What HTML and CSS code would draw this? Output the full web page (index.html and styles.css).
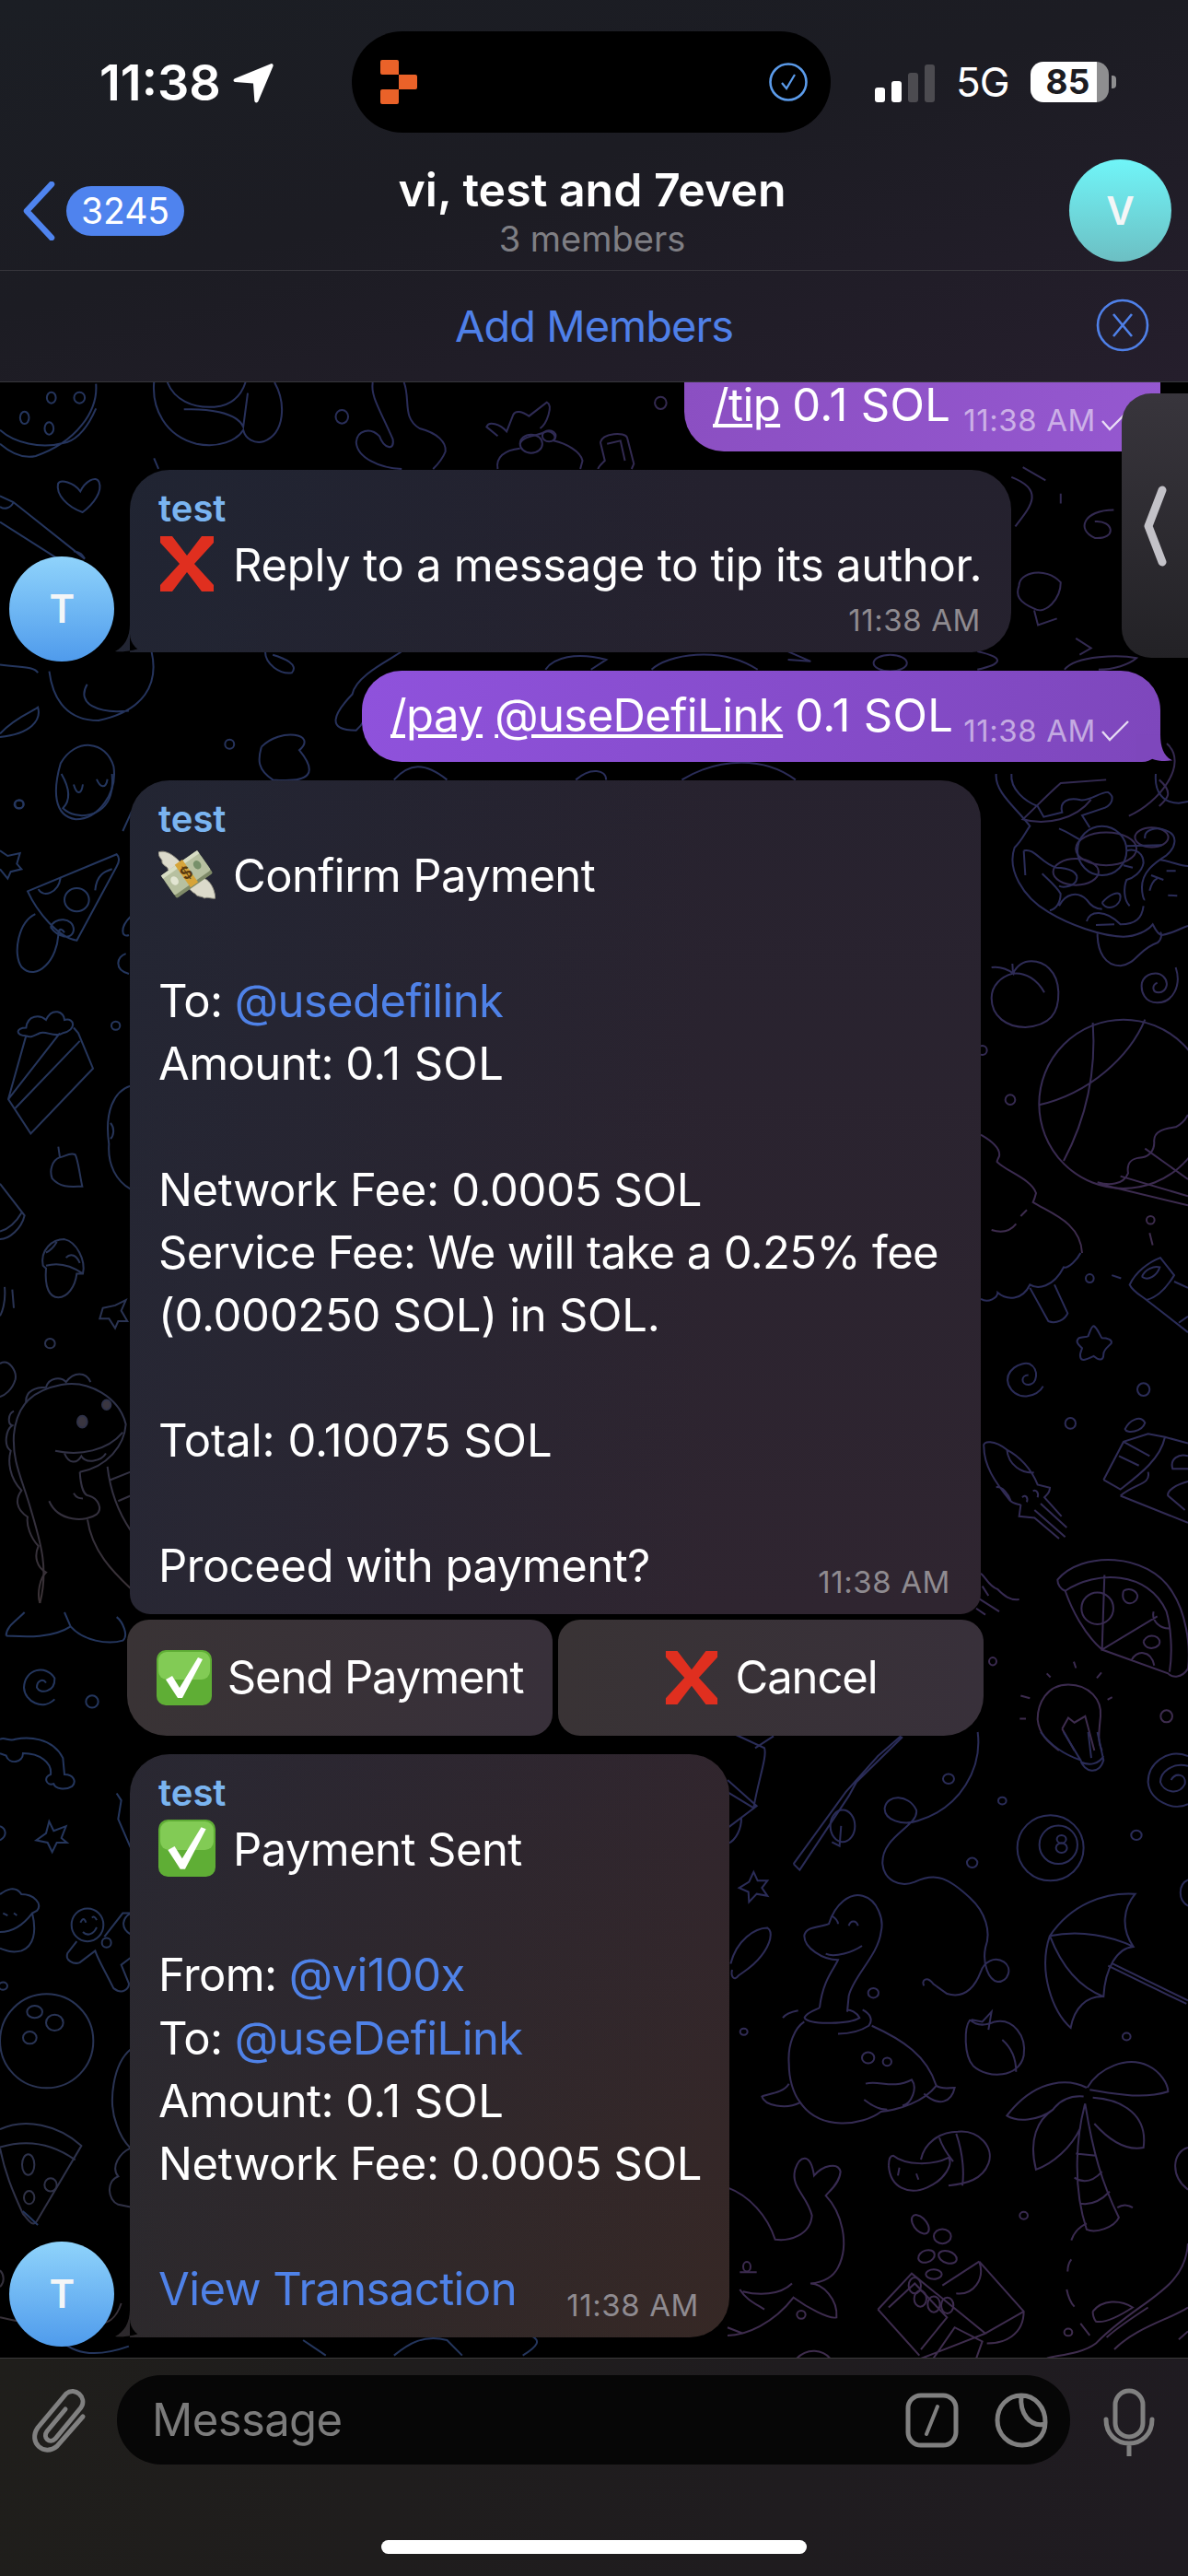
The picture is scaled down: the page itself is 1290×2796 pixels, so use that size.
FILE: index.html
```html
<!DOCTYPE html>
<html lang="en">
  <head>
    <meta charset="UTF-8" />
    <title>vi, test and 7even</title>
    <link rel="stylesheet" href="styles.css">
  </head>
  <body>
    <svg width="0" height="0" class="defs">
      <defs>
        <linearGradient id="leftInk" gradientUnits="userSpaceOnUse" x1="0" y1="400" x2="0" y2="2560">
          <stop offset="0" stop-color="#24365e" />
          <stop offset=".3" stop-color="#2a3352" />
          <stop offset=".45" stop-color="#33303f" />
          <stop offset=".6" stop-color="#40332f" />
          <stop offset="1" stop-color="#4d3225" />
        </linearGradient>
        <linearGradient id="rightInk" gradientUnits="userSpaceOnUse" x1="0" y1="400" x2="0" y2="2560">
          <stop offset="0" stop-color="#2a2c58" />
          <stop offset=".4" stop-color="#3a2a50" />
          <stop offset=".7" stop-color="#45304a" />
          <stop offset="1" stop-color="#4a304a" />
        </linearGradient>
        <linearGradient id="topInk" gradientUnits="userSpaceOnUse" x1="0" y1="0" x2="1568" y2="0">
          <stop offset="0" stop-color="#24365e" />
          <stop offset=".6" stop-color="#2a2c58" />
          <stop offset="1" stop-color="#35294f" />
        </linearGradient>
        <symbol id="cross" viewBox="0 0 62 62">
          <path fill="#e02f1f" d="M2 1 L15 1 L31 22 L47 1 L60 1 L60 8 L39 31 L60 54 L60 61 L47 61 L31 40 L15 61 L2 61 L2 54 L23 31 L2 8 Z" />
        </symbol>
        <symbol id="tick" viewBox="0 0 60 60">
          <rect x="0" y="0" width="60" height="60" rx="10" fill="#5fae35" />
          <rect x="2" y="2" width="56" height="30" rx="9" fill="#82cb55" />
          <path fill="#fff" d="M10 32 L17 28 L25 41 L45 8 L50 10 L28 52 L23 52 Z" />
        </symbol>
      </defs>
    </svg>

    <div class="screen">
      <svg class="doodles" width="1290" height="2796" viewBox="0 0 1290 2796" fill="none">
        <g class="ink-top" transform="translate(0 400) scale(.8227 .3571)">
          <path d="M1335 330 C1380 370 1360 420 1340 480 M1345 660 C1345 620 1380 600 1400 650 C1400 700 1380 750 1365 730 C1345 710 1340 690 1345 660 M1365 735 L1370 780 L1395 760 M1420 820 L1440 850 L1425 870" />
          <path d="M1470 430 C1430 430 1420 490 1445 515 C1475 520 1470 460 1445 465 M1350 300 L1380 340 M1400 380 L1400 410" />
          <path d="M200 860 C210 960 190 1040 130 1070 C90 1070 70 1010 65 920 M115 960 C100 1020 130 1050 170 1040 M0 900 C30 910 45 905 50 925 M0 1110 C20 1060 45 1040 50 1030 C55 1070 40 1110 0 1120" />
          <path d="M350 860 C350 900 370 930 385 925 C395 900 375 880 360 870 M530 860 C520 880 470 930 465 990 C440 1050 430 1100 470 1100 C490 1060 480 1020 500 980" />
          <path d="M80 1200 C100 1120 140 1130 150 1210 C155 1290 130 1370 100 1370 C70 1360 70 1280 80 1200 Z M345 1150 C370 1090 420 1110 395 1160 C420 1230 410 1260 360 1250 C340 1220 340 1190 345 1150" />
          <ellipse cx="303" cy="1142" rx="6" ry="14" />
          <ellipse cx="25" cy="1325" rx="6" ry="12" />
          <path d="M720 915 C730 880 760 860 800 885 L780 915 M860 915 C880 870 950 840 1000 915 M1040 860 L1070 890 L1040 885 M1290 860 C1330 880 1320 900 1290 915 M1405 915 C1420 870 1480 870 1500 880 C1490 900 1470 915 1450 915" />
          <ellipse cx="1175" cy="895" rx="22" ry="25" />
          <path d="M520 1250 C540 1200 560 1195 590 1250 M900 1250 C950 1180 1010 1180 1050 1250 M760 1250 C780 1210 800 1220 800 1250" />
          <path d="M1460 1250 L1400 1260 C1380 1300 1360 1350 1350 1370 C1380 1390 1420 1370 1440 1310 M1540 1140 C1570 1200 1530 1320 1490 1360 M1530 1250 C1550 1290 1540 1310 1530 1330" />
          <ellipse cx="1460" cy="1460" rx="40" ry="50" />
          <ellipse cx="1520" cy="1425" rx="22" ry="30" />
          <ellipse cx="1420" cy="1530" rx="30" ry="40" />
        </g>

        <g class="ink-top" transform="translate(0 410) scale(.4847 .3333)">
          <path d="M215 20 C220 110 170 210 80 255 C50 265 20 240 0 215 M0 170 C30 210 90 235 150 210 C180 195 200 150 215 100" />
          <ellipse cx="115" cy="65" rx="10" ry="18" />
          <ellipse cx="178" cy="65" rx="12" ry="18" />
          <ellipse cx="55" cy="130" rx="10" ry="20" />
          <ellipse cx="110" cy="165" rx="10" ry="20" />
          <path d="M345 15 C340 100 370 190 440 215 C490 230 530 205 545 170 C550 200 570 215 590 208 C640 180 640 80 615 15 M375 15 C390 70 430 100 480 95 C520 90 540 60 550 15 M412 103 C460 100 530 110 545 160 L555 50" />
          <ellipse cx="766" cy="127" rx="14" ry="22" />
          <path d="M835 15 C830 60 850 100 880 200 C885 240 860 230 850 190 C830 160 800 170 798 210 C800 260 850 295 900 297 M905 15 C920 70 900 130 940 165 C980 180 1000 210 998 240 C990 270 975 290 970 297" />
          <path d="M1115 190 L1090 160 C1095 140 1120 150 1135 175 L1150 120 C1155 105 1170 110 1185 125 L1225 80 C1240 90 1225 150 1210 165 M1165 215 C1170 190 1200 190 1215 180 C1235 165 1250 190 1240 205 C1270 215 1300 240 1305 270 L1300 297 M1165 230 C1130 235 1110 260 1115 297" />
          <ellipse cx="1190" cy="215" rx="25" ry="30" />
          <ellipse cx="1230" cy="190" rx="15" ry="18" />
          <path d="M1345 210 C1350 180 1400 175 1405 195 L1420 280 L1415 297 M1360 215 L1390 205 L1400 270 M1345 210 L1355 270 C1345 285 1340 290 1340 297" />
          <ellipse cx="1480" cy="82" rx="13" ry="20" />
          <path d="M130 345 C135 330 165 340 180 370 C190 340 215 315 222 340 C230 370 210 410 185 438 C150 420 125 380 130 345 Z" />
          <path d="M345 262 L355 297 M0 385 L30 405 L190 590 M0 470 L130 590 M0 420 C10 430 25 425 30 405 M165 565 C185 570 185 580 190 590" />
        </g>

        <g class="ink-left" transform="translate(0 840) scale(.3333 .574)">
          <path d="M200 0 C230 30 230 50 205 65 C250 90 340 80 360 40 C370 20 365 5 365 0 M240 20 C250 40 265 40 270 20 M315 10 C325 25 345 30 350 10" />
          <ellipse cx="63" cy="57" rx="14" ry="8" />
          <path d="M0 145 L25 155 L65 150 L55 170 L70 180 L35 185 L25 198 L0 180" />
          <path d="M90 222 L380 152 C395 160 385 170 380 175 L250 315 C190 310 120 260 90 222 Z M125 218 C140 235 190 225 197 197 M310 220 C315 190 340 185 365 180 M165 290 C175 270 240 270 240 295 C235 315 190 310 165 290 M115 265 C60 280 40 340 70 365 C120 395 190 350 190 300 M190 300 C195 290 205 295 210 300" />
          <ellipse cx="250" cy="238" rx="40" ry="22" />
          <path d="M85 495 L27 615 L100 680 L303 557 L255 490 L240 480 M27 615 L195 490 M50 632 L260 505 M85 495 C50 495 50 480 85 480 C90 455 130 455 150 465 C170 440 210 450 210 465 C245 460 250 485 205 490 C180 500 150 485 130 490 C110 495 100 500 85 495" />
          <path d="M190 705 L195 725 C170 730 160 750 170 765 C200 785 240 780 268 780 C260 760 255 730 245 720 C225 715 210 725 195 725" />
          <path d="M0 775 L80 835 C70 860 30 880 0 880 M0 865 C30 860 55 845 70 830" />
          <path d="M140 930 C130 900 170 880 210 880 C250 885 280 920 270 945 L250 945 C245 970 220 990 190 990 C160 990 145 970 150 935 Z M150 930 C180 925 220 925 270 945 M150 905 C170 900 180 890 185 885 M215 915 C230 905 250 910 260 925" />
          <path d="M15 970 C20 1000 5 1020 0 1025 M40 975 L45 1010" />
          <ellipse cx="163" cy="1077" rx="16" ry="9" />
          <path d="M335 1010 L375 1005 L410 995 L395 1015 L415 1035 L385 1035 L375 1048 L355 1030 L325 1030 Z" />
          <path d="M0 1115 C30 1105 55 1130 50 1145 C40 1165 15 1175 0 1178" />
          <path d="M130 1568 C160 1500 130 1450 100 1390 C70 1330 40 1300 45 1250 C55 1190 110 1165 200 1155 C290 1145 390 1180 410 1230 C405 1270 350 1310 260 1320 M180 1280 C260 1290 350 1280 400 1245" />
          <path d="M85 1190 C80 1165 120 1160 150 1160 C160 1140 200 1140 215 1150 C240 1130 280 1130 295 1150 M45 1205 C25 1210 25 1230 40 1232 C20 1240 10 1270 35 1280 C25 1300 30 1330 70 1355 C50 1370 50 1390 90 1405 C85 1420 100 1445 125 1460 C110 1480 120 1500 150 1510 C130 1520 120 1550 130 1568 M210 1285 C225 1305 250 1305 265 1290 C280 1305 330 1300 345 1285" />
          <ellipse cx="268" cy="1225" rx="16" ry="11" class="solid" />
          <ellipse cx="347" cy="1193" rx="14" ry="9" class="solid" />
          <path d="M260 1320 C262 1340 270 1365 290 1365 C320 1370 335 1390 315 1400 C280 1415 190 1415 160 1375 M240 1360 C250 1370 260 1370 270 1370 M285 1410 C300 1470 370 1510 425 1540 M350 1310 C360 1360 390 1400 425 1430 M360 1335 L425 1320 M385 1375 L425 1365" />
          <path d="M425 590 C370 600 340 640 355 700 C350 740 380 770 425 785 M360 660 C375 670 370 685 360 690 M425 270 C390 290 395 310 420 305 M410 340 C380 345 370 370 420 378 M400 108 L430 70" />
          <ellipse cx="377" cy="476" rx="14" ry="8" />
        </g>

        <g class="ink-left" transform="translate(0 1750) scale(.3333 .5102)">
          <path d="M20 50 C50 50 160 60 230 30 C270 60 350 70 400 60 C420 50 400 20 380 10 M210 0 L230 30 M20 50 C20 30 50 20 80 0" />
          <path d="M178 185 C140 210 80 190 78 160 C80 120 150 110 178 140 C180 170 130 175 120 160 C120 145 140 140 150 150" />
          <ellipse cx="300" cy="190" rx="20" ry="13" />
          <path d="M0 270 C15 265 30 275 50 270 C90 265 170 265 205 310 L210 345 C240 345 250 360 235 370 C210 380 180 375 175 365 C150 370 140 350 165 345 C170 320 130 300 75 300 C75 320 30 325 20 305 L0 300" />
          <path d="M160 445 L175 465 L215 455 L200 480 L218 490 L185 490 L170 510 L155 490 L118 485 L150 470 Z M0 455 C20 460 25 475 0 485" />
          <path d="M0 600 C20 590 50 580 70 600 C110 600 140 620 120 635 L105 640 C120 680 110 710 70 720 C40 725 20 720 0 715 M0 680 C30 680 70 670 105 640 M10 640 L25 645 M45 640 L55 645" />
          <ellipse cx="285" cy="665" rx="52" ry="35" />
          <path d="M250 700 L220 725 C210 740 240 750 260 745 L310 720 C320 740 340 760 370 800 C400 815 420 800 420 790 L395 750 L425 735 M340 690 L400 640 L425 640 M262 660 C270 650 275 650 280 660 M300 650 C305 645 312 650 315 655 M270 680 C285 690 305 685 315 670" />
          <ellipse cx="347" cy="703" rx="15" ry="10" />
          <ellipse cx="10" cy="795" rx="14" ry="8" />
          <ellipse cx="152" cy="912" rx="152" ry="100" />
          <ellipse cx="113" cy="850" rx="25" ry="13" />
          <ellipse cx="178" cy="873" rx="28" ry="17" />
          <ellipse cx="97" cy="905" rx="22" ry="13" />
          <path d="M0 1100 C80 1075 190 1090 265 1135 L120 1295 C105 1310 90 1290 75 1280 C40 1230 15 1190 0 1140 M0 1138 C90 1120 170 1130 245 1165" />
          <ellipse cx="92" cy="1175" rx="20" ry="22" />
          <ellipse cx="165" cy="1218" rx="20" ry="14" />
          <ellipse cx="95" cy="1245" rx="17" ry="14" />
          <path d="M425 930 C370 960 350 1040 380 1090 C390 1110 410 1130 425 1140 M425 1140 C390 1150 360 1180 385 1200 C345 1210 350 1250 385 1260 L425 1265 M380 385 L395 400 L385 440 L425 500 M395 1470 C380 1500 350 1520 300 1510 M0 1500 C60 1510 100 1510 140 1520 M0 1400 C15 1410 15 1425 0 1435 M425 640 C400 650 390 670 425 685" />
        </g>

        <g class="ink-right" transform="translate(1060 840) scale(.3333)">
          <path d="M65 0 C60 60 130 110 175 170 C160 190 150 215 125 240 C100 310 150 400 235 450 C300 490 410 530 480 530 C520 530 560 510 575 490 C585 510 595 525 605 525 C640 520 670 500 690 495" />
          <path d="M115 0 C110 50 160 90 200 105 L220 140 L280 125 C270 90 300 75 340 85 C370 90 410 55 430 60 C455 75 440 100 420 110 L345 135 L370 175" />
          <circle cx="410" cy="250" r="80" />
          <path d="M270 178 C300 190 320 205 340 215 M490 235 L605 232 M490 250 C520 240 545 260 545 290 C540 320 510 340 490 345 C480 370 480 410 500 430 M480 298 L510 305" />
          <path d="M155 250 C190 240 210 290 260 305 C300 305 340 320 325 350 C310 370 280 370 270 365 M215 325 C240 350 260 365 275 390 C275 420 260 440 240 445 M270 430 C290 390 330 380 360 410 C380 440 400 440 410 440 M155 250 L160 330" />
          <path d="M360 480 C370 445 420 440 470 490 C520 490 540 470 545 430 M395 520 C395 580 420 625 470 625 C520 620 530 570 590 550 C605 540 605 520 600 515 M410 420 C430 395 470 375 470 400 C470 430 430 450 410 420 M390 492 L450 490" />
          <path d="M550 210 C545 180 590 170 620 185 C660 200 650 240 620 265 C580 290 540 320 540 370 C540 390 545 410 550 410 M600 280 C640 285 660 300 690 300 M620 316 L650 316 M625 395 L655 397 M570 330 L610 345 M565 380 C570 360 580 345 590 340 M585 0 C580 60 610 95 660 95 L690 90" />
          <path d="M120 650 C80 660 50 690 50 730 C50 790 100 825 160 825 C240 820 270 780 268 710 C265 640 220 610 180 610 C150 610 130 630 120 650 M50 630 C80 625 110 640 120 650 L118 618 M120 650 C160 645 200 670 222 712" />
          <path d="M650 630 C670 690 640 745 590 745 C550 745 535 710 540 680 C550 650 590 640 610 660 C630 680 620 710 595 712 C575 712 570 690 590 680" />
          <circle cx="480" cy="1075" r="275" />
          <path d="M380 810 C390 950 370 1100 285 1260 M550 800 C500 920 370 1040 205 1078" />
          <path d="M15 1175 C50 1195 80 1220 75 1245 C70 1255 65 1265 70 1265 C100 1295 180 1320 195 1365 C190 1385 185 1395 185 1395 C240 1430 340 1460 345 1560 M50 1485 C80 1495 110 1490 130 1465 M145 1440 L165 1420 M565 1495 L575 1535" />
          <circle cx="568" cy="1453" r="13" />
          <circle cx="111" cy="1061" r="16" />
          <circle cx="20" cy="900" r="15" />
          <path d="M470 1310 L690 1375 M400 1335 L690 1405 M550 1220 L690 1320 M395 1330 C430 1340 480 1340 495 1300 C490 1270 500 1255 530 1250 C560 1250 580 1230 580 1200 C575 1160 620 1155 650 1150 C670 1140 680 1130 690 1110" />
        </g>

        <g class="ink-right" transform="translate(1060 1360) scale(.3333 .3444)">
          <path d="M15 145 C40 160 70 140 70 125 C100 150 150 150 175 100 C200 115 250 110 285 45 C300 50 330 20 340 0 M175 110 L235 215 C260 225 290 210 298 190 L255 100 M442 70 L472 80" />
          <circle cx="370" cy="80" r="13" />
          <path d="M383 230 C395 235 405 265 410 268 C425 268 445 272 440 285 C430 295 415 305 415 318 C415 345 395 335 383 325 C370 330 345 345 340 330 C335 315 345 305 345 300 C335 290 320 280 335 268 C345 265 360 265 365 262 C370 250 375 230 383 230 Z" />
          <path d="M218 420 C200 455 130 470 105 415 C90 370 145 340 175 350 C205 365 200 415 170 415 C145 415 145 385 170 385" />
          <circle cx="545" cy="430" r="20" />
          <circle cx="307" cy="537" r="17" />
          <circle cx="54" cy="1287" r="12" />
          <circle cx="620" cy="1460" r="19" />
          <path d="M500 100 C520 60 560 30 600 15 L645 70 C620 110 590 140 555 148 C530 130 510 120 500 100 Z M540 75 C550 50 580 40 598 45 C590 70 560 90 540 75 M555 148 L690 250 M645 90 L690 110 M690 200 L660 220" />
          <path d="M25 610 C20 590 60 590 100 620 C140 640 180 680 200 730 L240 740 C240 760 225 765 222 770 L278 830 M100 620 C105 670 150 695 188 692 M25 610 C25 670 60 720 110 780 C125 795 140 790 145 795 L140 830 L190 835 L270 900 M190 810 L290 895 M210 790 L295 865 M65 738 C85 735 105 760 112 780 M150 770 C160 760 170 770 165 785 M185 750 C195 745 205 755 200 770" />
          <path d="M415 715 L480 595 L560 570 L615 580 L690 600 M415 715 L470 745 C530 700 600 650 615 580 M465 640 L530 670 M470 765 C520 725 570 730 560 690 M470 765 L690 850 M480 595 L565 640 M485 555 C500 525 535 510 550 535 C540 565 490 570 485 555 Z M690 640 C660 630 630 650 640 680 L690 680 M690 720 C650 730 620 750 625 765 L680 810" />
          <path d="M265 1030 C340 940 560 940 640 1070 C680 1130 700 1230 690 1310 C670 1340 640 1340 625 1325 L410 1250 C350 1200 310 1120 290 1065 C275 1060 265 1045 265 1030 Z M290 1065 C390 1000 560 1000 620 1130 C635 1180 640 1260 630 1320 M418 1015 L410 1250 L590 1145 M505 1285 C520 1250 570 1250 580 1300 M578 1130 C570 1160 600 1185 632 1183 M480 1065 C500 1050 540 1070 520 1095 C500 1115 470 1100 480 1065 M545 1225 C560 1190 610 1210 595 1235 C580 1250 550 1250 545 1225" />
          <ellipse cx="395" cy="1120" rx="52" ry="50" />
          <path d="M300 1360 C230 1360 200 1420 200 1470 C205 1520 240 1545 270 1568 M300 1360 C370 1360 410 1410 405 1460 C400 1510 395 1540 410 1568 M280 1500 L300 1465 L320 1480 L355 1460 L385 1568 M280 1500 L320 1568 M145 1395 L175 1403 M142 1468 L162 1468 M230 1325 L242 1337 M318 1288 L325 1308 M408 1322 L393 1340 M443 1400 L428 1408" />
          <path d="M15 1010 C30 1020 40 1050 70 1060 C90 1080 110 1095 140 1092 M20 1050 L40 1080 M10 1090 L75 1130 M0 1120 L30 1140" />
        </g>

        <g class="ink-right" transform="translate(790 1880) scale(.3333 .4337)">
          <path d="M215 330 L235 345 L395 160 L420 125 L570 12 M215 330 L385 150 L490 60 L565 10 M340 275 L365 285 L370 235" />
          <circle cx="375" cy="235" r="40" />
          <path d="M815 0 C830 90 760 190 620 222 C570 235 510 220 512 190 C520 155 590 155 615 195 C625 235 500 260 505 330 C510 370 560 390 610 375 C680 350 720 365 790 415 C840 450 860 500 840 540 C830 580 850 620 880 625 C915 625 930 590 900 575 C870 560 835 575 825 600 C800 650 760 665 715 655 L670 630 C650 610 630 620 640 635" />
          <ellipse cx="720" cy="117" rx="18" ry="12" />
          <ellipse cx="895" cy="172" rx="13" ry="9" />
          <ellipse cx="797" cy="327" rx="17" ry="12" />
          <ellipse cx="1332" cy="258" rx="17" ry="12" />
          <ellipse cx="475" cy="653" rx="17" ry="12" />
          <ellipse cx="53" cy="750" rx="12" ry="8" />
          <ellipse cx="1300" cy="762" rx="13" ry="9" />
          <ellipse cx="965" cy="1210" rx="13" ry="9" />
          <ellipse cx="1110" cy="1502" rx="13" ry="9" />
          <ellipse cx="240" cy="1458" rx="14" ry="10" />
          <ellipse cx="1052" cy="290" rx="108" ry="82" />
          <ellipse cx="1078" cy="282" rx="62" ry="48" />
          <ellipse cx="1088" cy="268" rx="15" ry="10" />
          <ellipse cx="1088" cy="290" rx="18" ry="12" />
          <path d="M85 350 L98 372 L130 372 L112 390 L130 410 L95 405 L70 425 L68 400 L38 390 L70 375 Z" />
          <path d="M10 580 C30 520 90 490 130 490 C150 500 140 530 110 560 C80 590 50 600 35 610 C20 625 10 610 15 595" />
          <path d="M300 690 C310 620 350 590 360 570 C310 570 250 540 250 510 C255 485 300 490 330 480 C350 430 400 400 440 410 C490 420 510 470 500 500 C490 560 410 610 395 660 L390 700 M250 715 C260 700 290 695 300 690 M250 715 C270 735 400 730 430 715 C420 700 400 695 390 695 M200 830 C195 780 220 740 250 725 M470 735 C570 770 650 810 680 885 C640 925 560 945 500 950 C440 985 300 1000 235 925 C215 905 200 870 200 830 M200 880 C180 905 130 905 112 912 C120 935 190 945 235 928 M450 880 C490 870 540 895 600 870 C620 890 600 930 570 935 M445 920 C470 935 500 945 520 945 M680 885 C700 895 720 890 740 890 C730 925 690 940 640 905 M320 555 C350 565 410 550 438 535 M395 485 C400 470 420 470 425 485 M340 460 C350 465 360 470 360 480 M180 715 C190 705 210 700 230 697 M440 695 C465 705 475 720 460 735 C430 750 390 755 360 755" />
          <ellipse cx="458" cy="815" rx="20" ry="14" />
          <ellipse cx="520" cy="825" rx="14" ry="10" />
          <path d="M790 720 C770 740 770 810 800 835 C850 870 950 865 965 810 C975 760 930 715 870 725 C840 735 810 735 790 720 M795 720 L830 725 L860 700 L850 745 M895 770 C925 790 940 820 940 850" />
          <path d="M1050 510 C1120 430 1230 400 1328 405 C1290 440 1280 490 1322 537 C1270 540 1230 590 1225 662 C1170 660 1130 690 1118 740 C1060 700 1010 600 1050 510 M1050 510 C1150 495 1250 510 1322 537 M1050 510 C1090 590 1150 640 1225 662 M1240 585 L1495 680 M1250 578 L1500 672" />
          <path d="M1170 890 C1120 870 1010 860 910 960 C940 975 1010 975 1060 945 C1090 915 1130 910 1160 912 M1172 890 C1210 840 1300 810 1370 835 C1410 850 1435 880 1435 900 C1350 920 1260 905 1180 895 M1060 945 C1010 970 980 1020 1005 1095 C1060 1080 1120 1040 1150 990 M1190 915 C1290 920 1370 960 1355 1040 C1290 1050 1230 1010 1195 980 M1165 930 C1140 1000 1120 1130 1170 1245 C1200 1255 1260 1240 1275 1215 C1220 1130 1190 1050 1165 930 M1135 1055 L1200 1060 M1130 1115 C1160 1130 1190 1125 1220 1100 M1150 1180 C1190 1185 1220 1170 1245 1150 M1270 1190 C1290 1180 1310 1185 1320 1190 M1170 1230 C1140 1240 1125 1260 1120 1272 M1120 1320 C1110 1330 1108 1345 1108 1350 M1105 1395 C1110 1415 1120 1430 1130 1438 M1150 1480 L1180 1510" />
          <path d="M525 1085 C530 1140 590 1160 650 1140 C710 1120 735 1080 720 1065 C670 1085 580 1085 540 1060 C530 1060 525 1070 525 1085 M630 1070 C640 1030 690 1000 750 1000 C820 995 870 1040 850 1080 C830 1120 780 1130 720 1135 M745 1005 C770 1060 770 1110 765 1135 M690 1015 C700 1040 720 1060 735 1075 M560 1090 L555 1110 M615 1105 L622 1120" />
          <ellipse cx="628" cy="1232" rx="32" ry="18" transform="rotate(35 628 1232)" />
          <ellipse cx="700" cy="1262" rx="28" ry="18" />
          <ellipse cx="648" cy="1312" rx="27" ry="15" transform="rotate(-12 648 1312)" />
          <ellipse cx="717" cy="1314" rx="30" ry="15" transform="rotate(12 717 1314)" />
          <ellipse cx="672" cy="1357" rx="26" ry="12" />
          <path d="M490 1445 L600 1355 L840 1505 L630 1568 M525 1440 L610 1380 L715 1465 L630 1545 M820 1325 L700 1385 M820 1325 L965 1450 C965 1510 900 1530 845 1530 M965 1450 L840 1505 M820 1325 C840 1370 800 1410 745 1405 M490 1445 L625 1560 M670 1568 L740 1490 L830 1525 L810 1568" />
          <circle cx="610" cy="1385" r="20" />
          <circle cx="628" cy="1418" r="20" />
          <circle cx="672" cy="1432" r="20" />
          <circle cx="716" cy="1435" r="20" />
          <path d="M0 1140 C70 1160 130 1210 155 1270 C200 1275 270 1260 275 1210 C260 1160 205 1140 220 1095 C235 1060 270 1050 282 1110 C310 1085 360 1075 368 1100 C365 1130 330 1150 320 1160 C370 1200 400 1280 360 1340 C340 1370 300 1378 270 1380 C310 1380 360 1420 355 1465 C330 1470 260 1440 215 1415 C150 1480 60 1510 0 1510 M50 1400 C100 1410 170 1410 210 1380 M40 1395 C60 1420 90 1430 120 1445 M40 1352 L95 1352 M0 1490 L50 1505" />
          <circle cx="63" cy="1338" r="12" />
          <path d="M1500 1280 C1490 1400 1340 1420 1200 1530 C1150 1560 1050 1560 1040 1568 M1190 1450 C1220 1420 1280 1420 1320 1440 C1280 1460 1230 1480 1200 1475 C1190 1465 1190 1455 1190 1450 M1370 1440 C1330 1460 1270 1490 1235 1515 M1500 1440 C1440 1470 1330 1490 1260 1545 M225 1568 C260 1540 310 1545 335 1568 M1470 1520 L1500 1500" />
          <path d="M1020 0 C1060 40 1110 60 1150 70 C1160 100 1210 110 1225 70 L1205 0 M1095 0 L1150 70 M1175 0 L1185 65 M1150 75 C1180 85 1210 80 1225 60 M1500 60 C1430 40 1370 80 1370 125 C1375 170 1450 200 1500 180 M1500 85 C1450 75 1410 100 1410 125 C1420 150 1470 160 1490 130 C1495 105 1460 100 1445 120 M1500 370 C1470 380 1465 420 1500 435 M1500 1040 C1450 1050 1440 1110 1500 1145 M8 0 L120 40 C130 60 100 120 85 190 L0 150 M90 40 L150 10 M0 280 C30 270 45 240 45 215 M0 120 L95 185 L0 240" />
        </g>

        <g class="ink-left" transform="translate(0 2400) scale(.8227 .3333)">
          <path d="M30 0 C40 20 45 35 50 45 M80 420 C100 470 130 475 170 440 M400 420 L430 470 M520 470 C540 430 560 400 590 420 L610 470 M690 470 C710 440 715 420 700 405" />
        </g>
      </svg>

      <header class="topbar">
        <div class="status">
          <div class="status-time">
            <span>11:38</span>
            <svg class="loc" width="44" height="44" viewBox="0 0 40 40"><path fill="#fff" d="M38 1 C39 1 40 2 39.6 3.5 L25 38 C24 40 21.5 40 21.2 37.5 L20 20.5 L2 19 C0 18.5 0 16.5 1.8 15.6 Z" /></svg>
          </div>
          <div class="island">
            <svg width="40" height="48" viewBox="0 0 40 48"><path fill="#ea6229" d="M2 0 H18 A2 2 0 0 1 20 2 V16 H38 A2 2 0 0 1 40 18 V30 A2 2 0 0 1 38 32 H20 V46 A2 2 0 0 1 18 48 H2 A2 2 0 0 1 0 46 V34 A2 2 0 0 1 2 32 H20 V16 H2 A2 2 0 0 1 0 14 V2 A2 2 0 0 1 2 0 Z" /></svg>
            <svg width="42" height="42" viewBox="0 0 42 42" fill="none" stroke="#5b9bea"><circle cx="21" cy="21" r="19.5" stroke-width="2.6" /><path d="M14 22 L19 28 L28 13" stroke-width="2.2" /></svg>
          </div>
          <div class="status-right">
            <div class="signal">
              <i class="bar on b1"></i><i class="bar on b2"></i><i class="bar b3"></i><i class="bar b4"></i>
            </div>
            <span class="net">5G</span>
            <div class="battery"><span>85</span></div>
            <i class="nub"></i>
          </div>
        </div>

        <div class="nav">
          <div class="nav-back">
            <svg width="36" height="64" viewBox="0 0 36 64" fill="none"><path d="M32 3 L5 32 L32 61" stroke="#4f84ef" stroke-width="6.5" stroke-linecap="round" stroke-linejoin="round" /></svg>
            <span class="badge">3245</span>
          </div>
          <div class="nav-title">
            <div class="title">vi, test and 7even</div>
            <div class="subtitle">3 members</div>
          </div>
          <div class="avatar avatar-v">V</div>
        </div>

        <div class="addrow">
          <span class="add-link">Add Members</span>
          <svg class="add-close" width="58" height="58" viewBox="0 0 58 58" fill="none" stroke="#4f80e8" stroke-width="2.6"><circle cx="29" cy="29" r="27" /><path d="M19 17 L39 41 M39 17 L19 41" /></svg>
        </div>
      </header>

      <main class="chat">
        <div class="row row-out">
          <div class="bubble out tip">
            <div class="last-line"><span><u>/tip</u> <span class="sol">0.1 SOL</span></span><span class="time time-out">11:38 AM<svg width="34" height="24" viewBox="0 0 34 24" fill="none"><path d="M3 13 L11 22 L31 2" stroke="#fff" stroke-opacity=".8" stroke-width="2.4" /></svg></span></div>
          </div>
        </div>

        <div class="row row-in">
          <div class="avatar avatar-t">T</div>
          <div class="bubble in tail-in reply">
            <div class="name">test</div>
            <div><svg class="emoji"><use href="#cross" /></svg>Reply to a message to tip its author.</div>
            <div class="time time-row">11:38 AM</div>
          </div>
        </div>

        <div class="row row-out">
          <div class="bubble out tail-out pay">
            <div class="last-line"><span><u>/pay</u> <u>@useDefiLink</u> <span class="sol">0.1 SOL</span></span><span class="time time-out">11:38 AM<svg width="34" height="24" viewBox="0 0 34 24" fill="none"><path d="M3 13 L11 22 L31 2" stroke="#fff" stroke-opacity=".8" stroke-width="2.4" /></svg></span></div>
          </div>
        </div>

        <div class="row row-in">
          <div class="group">
            <div class="bubble in confirm">
              <div class="name">test</div>
              <div>
                <svg class="emoji" viewBox="0 0 62 54">
                  <path fill="#dcdacb" stroke="#8f8d80" stroke-width="1" d="M26 16 C16 5 7 0 0 3 C0 8 3 10 4 12 C3 16 8 18 10 20 C10 24 16 27 23 27 Z" />
                  <path fill="#dcdacb" stroke="#8f8d80" stroke-width="1" d="M36 32 C48 26 60 34 62 53 C57 54 54 51 50 53 C46 50 42 52 40 48 C36 46 32 42 32 38 Z" />
                  <g transform="rotate(-35 31 27)">
                    <rect x="7" y="19" width="48" height="23" rx="2" fill="#7f8a68" />
                    <rect x="7" y="12" width="48" height="26" rx="2" fill="#b7c0a0" />
                    <rect x="7" y="12" width="48" height="4" fill="#d8ddc4" />
                    <ellipse cx="46" cy="25" rx="4" ry="5" fill="#77906a" />
                    <ellipse cx="16" cy="25" rx="4" ry="5" fill="#e2e5d2" />
                    <rect x="26" y="11" width="10" height="30" fill="#d6a43a" />
                    <text x="31" y="32" class="dollar">$</text>
                  </g>
                </svg>Confirm Payment<br>
                <br>
                To: <span class="link">@usedefilink</span><br>
                Amount: <span class="sol">0.1 SOL</span><br>
                <br>
                <span class="sp-network">Network Fee: 0.0005 SOL</span><br>
                <span class="sp-service">Service Fee: We will take a 0.25% fee</span><br>
                <span class="sp-paren">(0.000250 SOL) in SOL.</span><br>
                <br>
                <span class="sp-total">Total: 0.10075 SOL</span><br>
                <br>
              </div>
              <div class="last-line"><span class="sp-proceed">Proceed with payment?</span><span class="time">11:38 AM</span></div>
            </div>
            <div class="buttons">
              <div class="btn btn-left"><svg class="emoji-btn"><use href="#tick" /></svg>Send Payment</div>
              <div class="btn btn-right"><svg class="emoji-btn"><use href="#cross" /></svg>Cancel</div>
            </div>
          </div>
        </div>

        <div class="row row-in">
          <div class="avatar avatar-t">T</div>
          <div class="bubble in tail-in sent">
            <div class="name">test</div>
            <div>
              <svg class="emoji"><use href="#tick" /></svg>Payment Sent<br>
              <br>
              From: <span class="link">@vi100x</span><br>
              To: <span class="link">@useDefiLink</span><br>
              Amount: <span class="sol">0.1 SOL</span><br>
              <span class="sp-network">Network Fee: 0.0005 SOL</span><br>
              <br>
            </div>
            <div class="last-line"><span class="link">View Transaction</span><span class="time">11:38 AM</span></div>
          </div>
        </div>
      </main>

      <aside class="handle">
        <svg width="28" height="88" viewBox="0 0 28 88" fill="none"><path d="M22 5 L7 44 L22 83" stroke="#c3c2c8" stroke-width="9" stroke-linecap="round" stroke-linejoin="round" /></svg>
      </aside>

      <footer class="composer">
        <div class="input-row">
          <svg class="ico-attach" width="62" height="72" viewBox="0 0 62 72" fill="none" stroke="#808080" stroke-width="5" stroke-linecap="round"><path d="M38 24 L18 48 C13 55 21 62 27 56 L55 22 C62 11 48 -1 39 7 L8 44 C-3 60 15 76 29 64 L57 32" /></svg>
          <div class="input">
            <span class="placeholder">Message</span>
            <svg width="58" height="60" viewBox="0 0 58 60" fill="none" stroke="#808080" stroke-width="5"><rect x="3" y="3" width="52" height="54" rx="14" /><path d="M35 15 L23 45" stroke-width="4" stroke-linecap="round" /></svg>
            <svg width="58" height="60" viewBox="0 0 58 60" fill="none" stroke="#808080" stroke-width="5"><path d="M29 3 C44 3 55 16 55 32 C55 47 44 57 30 57 C15 57 3 45 3 30 C3 15 14 3 29 3 Z M29 3 C27 22 38 38 55 34" /></svg>
          </div>
          <svg class="ico-mic" width="56" height="74" viewBox="0 0 56 74" fill="none" stroke="#808080" stroke-width="5"><rect x="13" y="3" width="30" height="50" rx="15" /><path d="M3 34 C3 50 14 60 28 60 C42 60 53 50 53 34 M28 60 L28 74" stroke-linecap="round" /></svg>
        </div>
        <div class="home-bar"></div>
      </footer>
    </div>
  </body>
</html>
```

FILE: styles.css
```css
* {
  box-sizing: border-box;
}

body {
  margin: 0;
  background: #000;
  font-family: "Inter", "Liberation Sans", sans-serif;
  color: #fff;
}

.defs {
  position: absolute;
}

.screen {
  position: relative;
  width: 1290px;
  height: 2796px;
  display: flex;
  flex-direction: column;
  overflow: hidden;
  background: #000;
}

/* wallpaper */
.doodles {
  position: absolute;
  top: 0;
  left: 0;
}

.doodles path,
.doodles ellipse,
.doodles circle {
  vector-effect: non-scaling-stroke;
  stroke-width: 2;
}

.doodles .solid {
  fill: #3a3640;
}

.ink-left {
  stroke: url(#leftInk);
}

.ink-right {
  stroke: url(#rightInk);
}

.ink-top {
  stroke: url(#topInk);
}

/* header */
.topbar {
  position: relative;
  z-index: 2;
  height: 415px;
  flex: none;
  background: linear-gradient(165deg, #1b1e24 0%, #1c1c23 45%, #251e2c 100%);
  border-bottom: 1px solid #37373c;
}

.status {
  display: grid;
  grid-template-columns: 382px 520px 388px;
  height: 144px;
  padding-top: 34px;
}

.status-time {
  display: flex;
  align-items: center;
  gap: 13px;
  padding-left: 108px;
  font-size: 54px;
  font-weight: 600;
  letter-spacing: 0;
}

.loc {
  margin-top: 2px;
}

.island {
  height: 110px;
  background: #000;
  border-radius: 55px;
  display: flex;
  align-items: center;
  justify-content: space-between;
  padding: 0 25px 0 31px;
}

.status-right {
  display: flex;
  align-items: center;
  padding-left: 48px;
}

.signal {
  display: flex;
  align-items: flex-end;
  gap: 7px;
  height: 41px;
  margin-top: 2px;
}

.bar {
  display: block;
  width: 11px;
  border-radius: 3px;
  background: #4c4b50;
}

.bar.on {
  background: #fff;
}

.b1 { height: 16px; }
.b2 { height: 23px; }
.b3 { height: 32px; }
.b4 { height: 41px; }

.net {
  margin-left: 23px;
  font-size: 44px;
  letter-spacing: -1px;
}

.battery {
  width: 85px;
  height: 44px;
  margin-left: 23px;
  border-radius: 14px;
  background: linear-gradient(90deg, #fff 0 72px, #8e8e90 72px);
  color: #1c1c22;
  font-size: 37px;
  font-weight: 700;
  line-height: 44px;
  padding-left: 17px;
}

.nub {
  display: block;
  width: 5px;
  height: 14px;
  margin-left: 3px;
  border-radius: 0 4px 4px 0;
  background: #8e8e90;
}

.nav {
  display: grid;
  grid-template-columns: 300px 1fr 300px;
  align-items: center;
  height: 150px;
  padding: 20px 18px 0 24px;
  border-bottom: 1px solid #37363c;
}

.nav-back {
  display: flex;
  align-items: center;
  gap: 12px;
}

.badge {
  width: 128px;
  height: 54px;
  border-radius: 27px;
  background: #4f83ee;
  font-size: 39px;
  line-height: 54px;
  text-align: center;
}

.nav-title {
  text-align: center;
  margin-left: -10px;
}

.title {
  font-size: 50px;
  font-weight: 600;
  line-height: 60px;
  letter-spacing: 0;
}

.subtitle {
  font-size: 38px;
  line-height: 46px;
  color: #7f7f84;
}

.avatar {
  display: flex;
  align-items: center;
  justify-content: center;
  border-radius: 50%;
  font-weight: 600;
  color: #f4f6f7;
}

.avatar-v {
  justify-self: end;
  width: 111px;
  height: 111px;
  background: linear-gradient(180deg, #70f5f8, #6cbfc3);
  font-size: 42px;
}

.addrow {
  display: flex;
  align-items: center;
  justify-content: center;
  position: relative;
  height: 119px;
}

.add-link {
  font-size: 47px;
  color: #4f80e8;
  letter-spacing: -1px;
}

.add-close {
  position: absolute;
  right: 42px;
  top: 30px;
}

/* messages */
.chat {
  position: relative;
  z-index: 1;
  flex: 1;
  display: flex;
  flex-direction: column;
  justify-content: flex-end;
  gap: 20px;
  overflow: hidden;
  padding-bottom: 22px;
  font-size: 49px;
  line-height: 68.1px;
  letter-spacing: -.6px;
  white-space: nowrap;
}

.sol {
  letter-spacing: .3px;
}

.sp-network { letter-spacing: -.35px; }
.sp-service { letter-spacing: -.65px; }
.sp-paren { letter-spacing: -.3px; }
.sp-total { letter-spacing: -.05px; }
.sp-proceed { letter-spacing: -.5px; }

.row {
  display: flex;
  flex: none;
}

.row-out {
  justify-content: flex-end;
  padding-right: 30px;
}

.row-in {
  padding-left: 141px;
}

.row-in .avatar-t {
  width: 114px;
  height: 114px;
  margin: 0 17px -10px -131px;
  align-self: flex-end;
  background: linear-gradient(180deg, #8fd3fb, #4f9bec);
  font-size: 42px;
}

.bubble {
  position: relative;
  border-radius: 43px;
}

.bubble.in {
  padding: 14px 33px 18px 31px;
  background:
    linear-gradient(90deg, rgba(24, 44, 60, .38), rgba(40, 30, 60, 0) 60%),
    linear-gradient(180deg, #24212e 0, #24212e 500px, #2f2530 1750px, #362824 2600px);
  background-attachment: fixed;
}

.bubble.out {
  padding: 15px 32px 16px 31px;
  background: linear-gradient(100deg, #8f52dc, #7e47bc);
}

.bubble.tip {
  width: 517px;
  background: linear-gradient(100deg, #8b4fc2, #9558d0);
  border-radius: 0 0 0 43px;
}

.pay {
  width: 867px;
  border-bottom-right-radius: 20px;
}

.bubble.reply {
  width: 957px;
  padding-bottom: 10px;
  border-bottom-left-radius: 20px;
  letter-spacing: -.28px;
}

.confirm {
  width: 924px;
  border-bottom-left-radius: 22px;
  border-bottom-right-radius: 22px;
}

.sent {
  width: 651px;
  border-bottom-left-radius: 20px;
}

.tail-in::before {
  content: "";
  position: absolute;
  left: -16px;
  bottom: 0;
  width: 50px;
  height: 30px;
  background: inherit;
  background-attachment: fixed;
  clip-path: path("M16 0 C16 14 10 24 0 29 C10 30 24 28 32 23 L50 30 L30 30 L16 30 Z");
}

.tail-out::after {
  content: "";
  position: absolute;
  right: -13px;
  bottom: 0;
  width: 40px;
  height: 30px;
  background: #7e47bc;
  clip-path: path("M27 0 C27 14 31 24 40 28 C30 30 18 28 14 24 L0 30 L0 0 Z");
}

.name {
  height: 56px;
  font-size: 40px;
  font-weight: 600;
  line-height: 56px;
  color: #7ab4f0;
  letter-spacing: 0;
}

.link {
  color: #4f82e8;
}

.last-line {
  display: flex;
  justify-content: space-between;
  align-items: flex-end;
}

.time {
  display: flex;
  align-items: center;
  font-size: 33px;
  line-height: 34px;
  letter-spacing: .6px;
  color: #8f8b90;
}

.time-out {
  color: rgba(255, 255, 255, .55);
  margin-bottom: 1px;
}

.time-out svg {
  margin-left: 4px;
  margin-right: 0;
}

.time-row {
  justify-content: flex-end;
  height: 50px;
}

.emoji {
  width: 62px;
  height: 62px;
  margin-right: 19px;
  vertical-align: -12px;
}

.dollar {
  font-family: "Liberation Sans", sans-serif;
  font-size: 20px;
  font-weight: 700;
  fill: #5a3a10;
  text-anchor: middle;
}

.buttons {
  display: grid;
  grid-template-columns: 462px 462px;
  gap: 6px;
  margin: 6px -3px 0 -3px;
  letter-spacing: -1.1px;
}

.btn {
  height: 126px;
  display: flex;
  align-items: center;
  justify-content: center;
  gap: 17px;
  border-radius: 24px;
  background: linear-gradient(90deg, #393335, #38303a);
}

.btn-left {
  border-bottom-left-radius: 43px;
}

.btn-right {
  border-bottom-right-radius: 43px;
}

.emoji-btn {
  width: 60px;
  height: 60px;
}

/* side panel handle */
.handle {
  position: absolute;
  z-index: 3;
  top: 427px;
  right: 0;
  width: 72px;
  height: 287px;
  display: flex;
  align-items: center;
  padding-left: 22px;
  border-radius: 32px 0 0 32px;
  background: linear-gradient(180deg, #38353c, #232226);
}

/* input */
.composer {
  position: relative;
  z-index: 2;
  flex: none;
  height: 237px;
  padding-top: 18px;
  border-top: 1px solid #3a3a3a;
  background: linear-gradient(100deg, #1f1e1b, #1f1b21);
}

.input-row {
  display: flex;
  align-items: center;
  height: 97px;
  padding-left: 33px;
}

.ico-attach {
  flex: none;
}

.ico-mic {
  flex: none;
  margin: 4px 0 0 36px;
}

.input {
  display: flex;
  align-items: center;
  gap: 39px;
  width: 1035px;
  height: 97px;
  margin-left: 32px;
  padding: 0 24px 0 38px;
  border-radius: 48px;
  background: #060606;
}

.placeholder {
  flex: 1;
  font-size: 49px;
  color: #7b7b7b;
  letter-spacing: -.6px;
}

.home-bar {
  width: 462px;
  height: 15px;
  margin: 82px auto 0;
  border-radius: 8px;
  background: #fff;
}
```
